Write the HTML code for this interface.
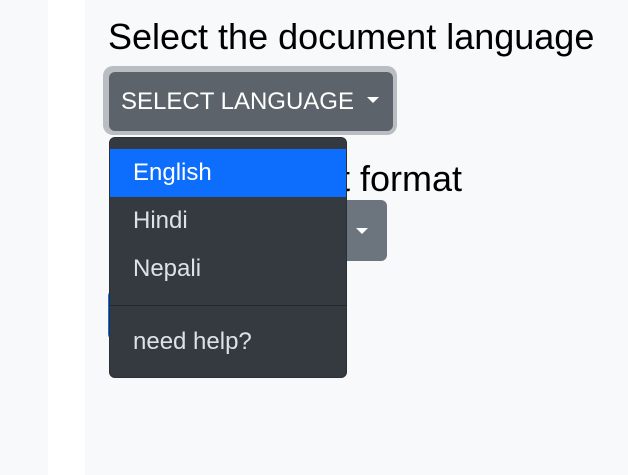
<!DOCTYPE html>
<html><head><style>
body{margin:0;width:628px;height:475px;overflow:hidden;background:#f8f9fa;font-family:"Liberation Sans",sans-serif;position:relative}
.w{position:absolute;left:48px;top:0;width:37px;height:475px;background:#fff}
.h{position:absolute;left:108px;top:16px;font-size:36px;color:#000;white-space:nowrap}
.h2w{position:absolute;left:112px;top:158px;width:350px;height:45px;overflow:hidden}
.h2{position:absolute;right:0;top:0;font-size:36px;color:#000;white-space:nowrap}
.ring{position:absolute;left:103px;top:66px;width:294px;height:69px;border-radius:10px;background:#babdc1}
.btn{position:absolute;left:109px;top:72px;width:284px;height:59px;border-radius:6px;background:#5c636a;color:#fff;font-size:24px}
.btn span{position:absolute;left:12px;top:16px}
.caret{position:absolute;width:0;height:0;border-left:6px solid transparent;border-right:6px solid transparent;border-top:6px solid #fff}
.b2{position:absolute;left:300px;top:200px;width:87px;height:61px;border-radius:6px;background:#6c757d}
.b3{position:absolute;left:108px;top:290px;width:60px;height:50px;border-radius:6px;background:#0d6efd}
.dd{position:absolute;left:109px;top:137px;width:238px;height:241px;border-radius:6px;background:#343a40;border:1px solid #2b3035;box-sizing:border-box;overflow:hidden}
.it{position:absolute;left:0;width:238px;height:48px;color:#dee2e6;font-size:24px}
.it span{position:absolute;left:23px;top:10px}
.act{background:#0d6efd;color:#fff}
.div{position:absolute;left:0;top:167px;width:238px;height:1px;background:#23272b}
</style></head><body>
<div class="w"></div>
<div class="h">Select the document language</div>
<div class="h2w"><div class="h2">Select the output format</div></div>
<div class="b2"><div class="caret" style="left:56px;top:28px"></div></div>
<div class="b3"></div>
<div class="ring"></div>
<div class="btn"><span>SELECT LANGUAGE</span><div class="caret" style="left:258px;top:25px"></div></div>
<div class="dd">
<div class="it act" style="top:11px"><span>English</span></div>
<div class="it" style="top:59px"><span>Hindi</span></div>
<div class="it" style="top:107px"><span>Nepali</span></div>
<div class="div"></div>
<div class="it" style="top:180px"><span>need help?</span></div>
</div>
</body></html>
